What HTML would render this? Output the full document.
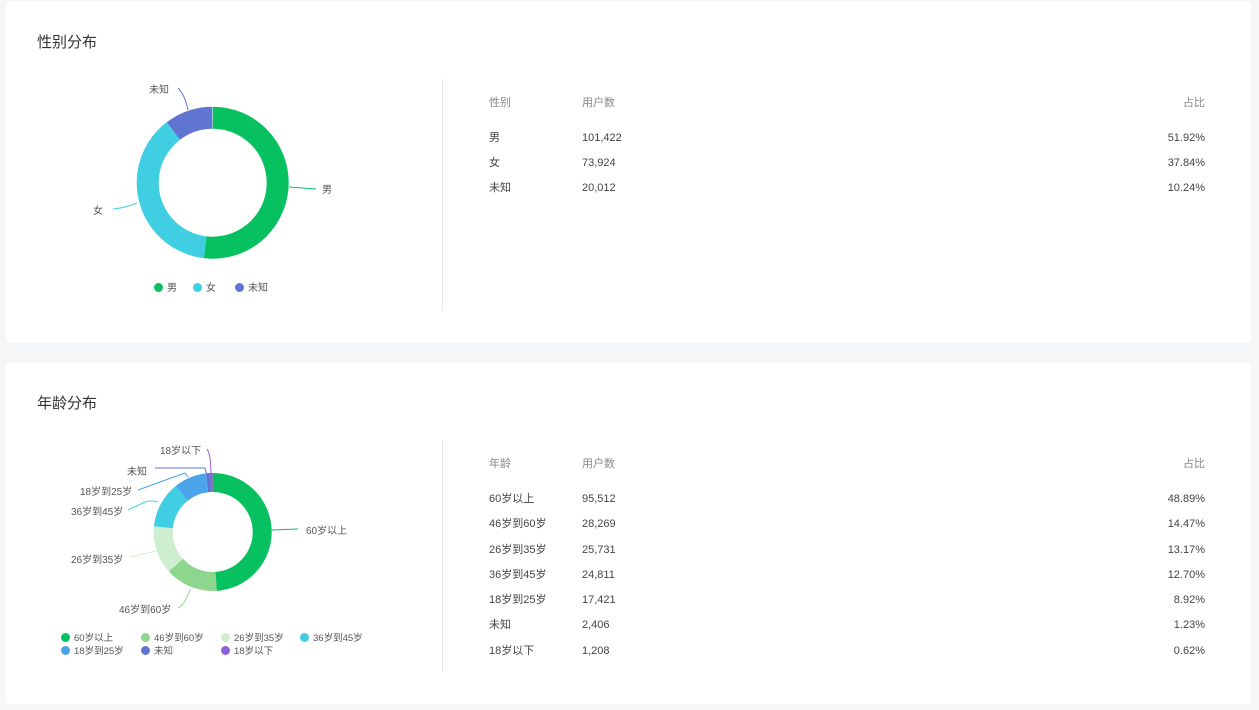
<!DOCTYPE html><html><head><meta charset="utf-8"><style>
body{margin:0;width:1259px;height:710px;background:#f5f6f8;font-family:"Liberation Sans","Noto Sans CJK SC",sans-serif;position:relative;overflow:hidden;color:#444}
.card{position:absolute;left:6px;width:1245px;background:#fff;border-radius:4px}
.t{position:absolute;font-size:15px;color:#333}
.a{position:absolute;font-size:11px;white-space:nowrap;line-height:12px}
.h{color:#888}
.c{color:#555;font-size:10px}
.r{text-align:right;width:80px}
.div{position:absolute;left:442px;width:1px;background:#e8e8e8}
.dot{display:inline-block;width:9px;height:9px;border-radius:50%;vertical-align:-1px;margin-right:4px}
svg{position:absolute;left:0;top:0}
</style></head><body>
<div class="card" style="top:1px;height:342px"></div>
<div class="card" style="top:362px;height:342px"></div>
<div class="t" style="left:37px;top:31px">性别分布</div>
<div class="t" style="left:37px;top:392px">年龄分布</div>
<div class="div" style="top:79px;height:232px"></div>
<div class="div" style="top:440px;height:232px"></div>
<svg width="1259" height="710">
<g transform="translate(212.7,182.7) rotate(-90)" fill="none" stroke-width="22">
<circle r="65" pathLength="100" stroke="#07c160" stroke-dasharray="51.92 100"/>
<circle r="65" pathLength="100" stroke="#40cee3" stroke-dasharray="0 51.92 37.84 100"/>
<circle r="65" pathLength="100" stroke="#6075d1" stroke-dasharray="0 89.76 10.24 100"/>
</g>
<g fill="none" stroke-width="1">
<path d="M289,187 L316,189" stroke="#07c160"/>
<path d="M137,203 Q125,208 113,209" stroke="#40cee3"/>
<path d="M188,110 Q185,95 178,88" stroke="#6075d1"/>
</g>
<g transform="translate(212.7,532) rotate(-90)" fill="none" stroke-width="19">
<circle r="49.5" pathLength="100" stroke="#07c160" stroke-dasharray="48.89 100"/>
<circle r="49.5" pathLength="100" stroke="#8ed68d" stroke-dasharray="0 48.89 14.47 100"/>
<circle r="49.5" pathLength="100" stroke="#cdeecf" stroke-dasharray="0 63.36 13.17 100"/>
<circle r="49.5" pathLength="100" stroke="#40cee3" stroke-dasharray="0 76.53 12.70 100"/>
<circle r="49.5" pathLength="100" stroke="#4ba3ea" stroke-dasharray="0 89.23 8.92 100"/>
<circle r="49.5" pathLength="100" stroke="#6075d1" stroke-dasharray="0 98.15 1.23 100"/>
<circle r="49.5" pathLength="100" stroke="#8e5fd8" stroke-dasharray="0 99.38 0.62 100"/>
</g>
<g fill="none" stroke-width="1">
<path d="M271,530 L298,529" stroke="#07c160"/>
<path d="M190,589 Q185,605 178,608" stroke="#8ed68d"/>
<path d="M156,551 L130,557" stroke="#cdeecf"/>
<path d="M158,502 Q150,500 145,502 L128,510" stroke="#40cee3"/>
<path d="M188,477 L185,473 L138,490" stroke="#4ba3ea"/>
<path d="M207,475 L205,468 L155,468" stroke="#6075d1"/>
<path d="M211,475 Q211,455 207,449" stroke="#8e5fd8"/>
</g>
</svg>
<div class="a c" style="left:322px;top:185px">男</div>
<div class="a c" style="left:93px;top:206px">女</div>
<div class="a c" style="left:149px;top:85px">未知</div>
<div class="a c" style="left:154px;top:283px"><span class="dot" style="background:#07c160"></span>男</div>
<div class="a c" style="left:193px;top:283px"><span class="dot" style="background:#40cee3"></span>女</div>
<div class="a c" style="left:235px;top:283px"><span class="dot" style="background:#6075d1"></span>未知</div>
<div class="a c" style="left:306px;top:526px">60岁以上</div>
<div class="a c" style="left:119px;top:605px">46岁到60岁</div>
<div class="a c" style="left:71px;top:555px">26岁到35岁</div>
<div class="a c" style="left:71px;top:507px">36岁到45岁</div>
<div class="a c" style="left:80px;top:487px">18岁到25岁</div>
<div class="a c" style="left:127px;top:467px">未知</div>
<div class="a c" style="left:160px;top:446px">18岁以下</div>
<div class="a c" style="left:61px;top:633px;font-size:9.5px"><span class="dot" style="background:#07c160"></span>60岁以上</div>
<div class="a c" style="left:141px;top:633px;font-size:9.5px"><span class="dot" style="background:#8ed68d"></span>46岁到60岁</div>
<div class="a c" style="left:221px;top:633px;font-size:9.5px"><span class="dot" style="background:#cdeecf"></span>26岁到35岁</div>
<div class="a c" style="left:300px;top:633px;font-size:9.5px"><span class="dot" style="background:#40cee3"></span>36岁到45岁</div>
<div class="a c" style="left:61px;top:646px;font-size:9.5px"><span class="dot" style="background:#4ba3ea"></span>18岁到25岁</div>
<div class="a c" style="left:141px;top:646px;font-size:9.5px"><span class="dot" style="background:#6075d1"></span>未知</div>
<div class="a c" style="left:221px;top:646px;font-size:9.5px"><span class="dot" style="background:#8e5fd8"></span>18岁以下</div>

<div class="a h" style="left:489px;top:97px">性别</div><div class="a h" style="left:582px;top:97px">用户数</div><div class="a h r" style="left:1125px;top:97px">占比</div>
<div class="a" style="left:489px;top:132px">男</div><div class="a" style="left:582px;top:132px">101,422</div><div class="a r" style="left:1125px;top:132px">51.92%</div>
<div class="a" style="left:489px;top:157px">女</div><div class="a" style="left:582px;top:157px">73,924</div><div class="a r" style="left:1125px;top:157px">37.84%</div>
<div class="a" style="left:489px;top:182px">未知</div><div class="a" style="left:582px;top:182px">20,012</div><div class="a r" style="left:1125px;top:182px">10.24%</div>

<div class="a h" style="left:489px;top:458px">年龄</div><div class="a h" style="left:582px;top:458px">用户数</div><div class="a h r" style="left:1125px;top:458px">占比</div>
<div class="a" style="left:489px;top:493px">60岁以上</div><div class="a" style="left:582px;top:493px">95,512</div><div class="a r" style="left:1125px;top:493px">48.89%</div>
<div class="a" style="left:489px;top:518px">46岁到60岁</div><div class="a" style="left:582px;top:518px">28,269</div><div class="a r" style="left:1125px;top:518px">14.47%</div>
<div class="a" style="left:489px;top:544px">26岁到35岁</div><div class="a" style="left:582px;top:544px">25,731</div><div class="a r" style="left:1125px;top:544px">13.17%</div>
<div class="a" style="left:489px;top:569px">36岁到45岁</div><div class="a" style="left:582px;top:569px">24,811</div><div class="a r" style="left:1125px;top:569px">12.70%</div>
<div class="a" style="left:489px;top:594px">18岁到25岁</div><div class="a" style="left:582px;top:594px">17,421</div><div class="a r" style="left:1125px;top:594px">8.92%</div>
<div class="a" style="left:489px;top:619px">未知</div><div class="a" style="left:582px;top:619px">2,406</div><div class="a r" style="left:1125px;top:619px">1.23%</div>
<div class="a" style="left:489px;top:645px">18岁以下</div><div class="a" style="left:582px;top:645px">1,208</div><div class="a r" style="left:1125px;top:645px">0.62%</div>
</body></html>
